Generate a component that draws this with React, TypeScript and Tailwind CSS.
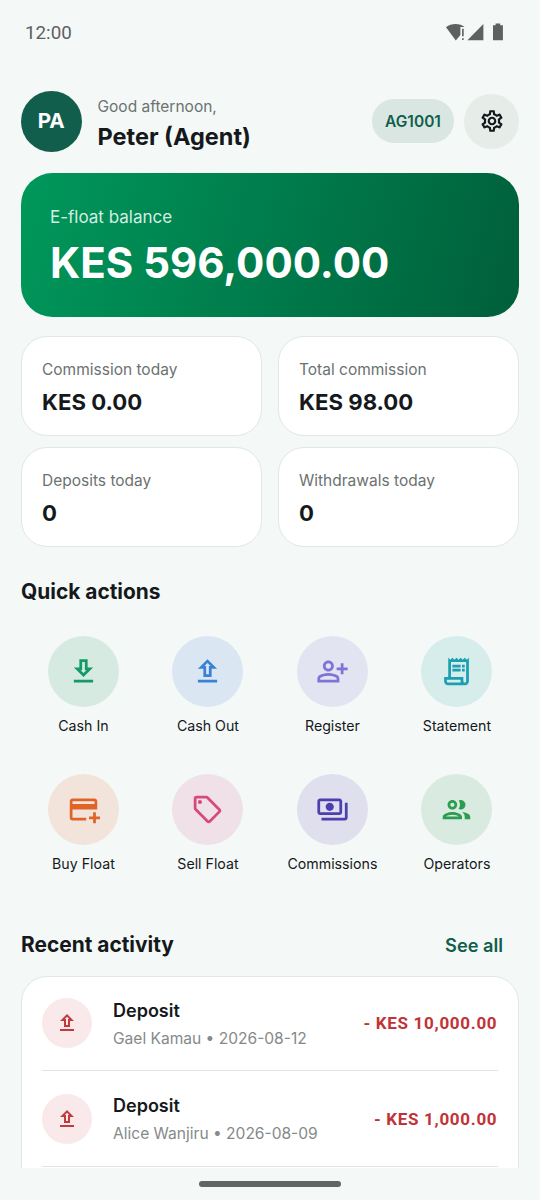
import type { IconType } from 'react-icons';
import {
  MdOutlineAddCard,
  MdOutlineDownload,
  MdOutlinePayments,
  MdOutlinePeople,
  MdOutlinePersonAddAlt,
  MdOutlineReceiptLong,
  MdOutlineSell,
  MdOutlineSettings,
  MdOutlineUpload,
} from 'react-icons/md';

const stats = [
  { label: 'Commission today', value: 'KES 0.00' },
  { label: 'Total commission', value: 'KES 98.00' },
  { label: 'Deposits today', value: '0' },
  { label: 'Withdrawals today', value: '0' },
];

const actions: { label: string; icon: IconType; tone: string }[] = [
  { label: 'Cash In', icon: MdOutlineDownload, tone: 'bg-[#d6eae2] text-[#129a68]' },
  { label: 'Cash Out', icon: MdOutlineUpload, tone: 'bg-[#dae7f2] text-[#3b82d6]' },
  { label: 'Register', icon: MdOutlinePersonAddAlt, tone: 'bg-[#e3e4f2] text-[#8172d8]' },
  { label: 'Statement', icon: MdOutlineReceiptLong, tone: 'bg-[#d7edeb] text-[#1c9fb0]' },
  { label: 'Buy Float', icon: MdOutlineAddCard, tone: 'bg-[#f2e4da] text-[#df6428]' },
  { label: 'Sell Float', icon: MdOutlineSell, tone: 'bg-[#efe1e7] text-[#d8487c]' },
  { label: 'Commissions', icon: MdOutlinePayments, tone: 'bg-[#dfdfed] text-[#4d3fb0]' },
  { label: 'Operators', icon: MdOutlinePeople, tone: 'bg-[#d9eae0] text-[#2a9d50]' },
];

const activity = [
  { title: 'Deposit', meta: 'Gael Kamau • 2026-08-12', amount: '- KES 10,000.00' },
  { title: 'Deposit', meta: 'Alice Wanjiru • 2026-08-09', amount: '- KES 1,000.00' },
];

function StatusBar() {
  return (
    <div className="flex h-[66px] shrink-0 items-center justify-between pl-[25px] pr-[36px] text-[#5f6161]">
      <span className="font-['Roboto',sans-serif] text-[18.8px] leading-[26px]">12:00</span>
      <svg width="58" height="18" viewBox="0 0 58 18" fill="currentColor" className="mt-[-3px]">
        <path d="M0 4.2C5 0 14 -.2 18.6 4H14.4v8L9.8 17.4z" />
        <path d="M16.1 5.8h1.6v7.4h-1.6zM16.1 15.2h1.6V17h-1.6z" />
        <path d="M37.4 1v16.2H21.4z" />
        <path d="M47 2.2h2.6V.6h4.6v1.6h2.7v15H47z" />
      </svg>
    </div>
  );
}

function Header() {
  return (
    <header className="mt-[25px] flex h-[60.5px] shrink-0 items-center px-[21px]">
      <div className="flex size-[60.5px] items-center justify-center rounded-full bg-[#115e4c] text-[20.6px] font-bold text-white">
        PA
      </div>
      <div className="ml-4 flex-1 pt-[2px]">
        <p className="text-[15.5px] leading-[29px] text-[#6b7270]">Good afternoon,</p>
        <h1 className="text-[23.5px] font-bold leading-[31px] text-[#15191b]">Peter (Agent)</h1>
      </div>
      <div className="flex h-[44px] w-[82px] items-center justify-center rounded-full bg-[#d9e6e2] text-[15.5px] font-semibold text-[#115e4c]">
        AG1001
      </div>
      <button className="ml-[10px] flex size-[55px] items-center justify-center rounded-full bg-[#e6ede9] text-[#15191b]">
        <MdOutlineSettings size={26} />
      </button>
    </header>
  );
}

export default function App() {
  return (
    <div className="flex h-[1200px] w-[540px] flex-col overflow-hidden bg-[#f4f8f7] font-['Inter',sans-serif]">
      <StatusBar />
      <main className="flex h-[1102px] shrink-0 flex-col overflow-hidden">
        <Header />

        {/* Balance */}
        <section className="mx-[21px] mt-[21px] h-[144.5px] shrink-0 rounded-[31.5px] bg-[linear-gradient(106deg,#00985b,#005f3b)] pl-[29px] pt-[32px] text-white">
          <p className="text-[17px] leading-6 text-[#d5eee3]">E-float balance</p>
          <p className="mt-[7px] text-[42px] font-bold leading-[54px]">KES 596,000.00</p>
        </section>

        {/* Stats */}
        <section className="mt-[18.5px] grid shrink-0 grid-cols-2 gap-x-4 gap-y-[10.5px] px-[21px]">
          {stats.map((s) => (
            <div key={s.label} className="h-[100.5px] rounded-[26px] border-[1.3px] border-[#dfe8e5] bg-white pl-[20px] pt-[21px]">
              <p className="text-[15.5px] leading-6 text-[#6b7270]">{s.label}</p>
              <p className="mt-[5px] text-[22.2px] font-bold leading-[30px] text-[#15191b]">{s.value}</p>
            </div>
          ))}
        </section>

        {/* Quick actions */}
        <h2 className="mt-[30px] shrink-0 px-[21px] text-[20.9px] font-bold leading-[30px] text-[#15191b]">Quick actions</h2>
        <section className="mt-[28.5px] grid shrink-0 grid-cols-4 gap-y-[28.5px] pl-[21.2px] pr-[20.8px]">
          {actions.map(({ label, icon: Icon, tone }) => (
            <div key={label} className="flex h-[110px] flex-col items-center">
              <div className={`flex size-[71px] shrink-0 items-center justify-center rounded-full ${tone}`}>
                <Icon size={33} />
              </div>
              <span className="mt-[8.4px] text-[14.2px] leading-[22px] text-[#15191b]">{label}</span>
            </div>
          ))}
        </section>

        {/* Recent activity */}
        <div className="mt-[46px] flex shrink-0 items-center justify-between pl-[21px] pr-[37px]">
          <h2 className="text-[20.9px] font-bold leading-[30px] text-[#15191b]">Recent activity</h2>
          <a className="text-[18.2px] font-semibold leading-[29px] text-[#115e4c]">See all</a>
        </div>
        <section className="mx-[21px] mt-[15.5px] h-[320px] shrink-0 rounded-[26px] border-[1.3px] border-[#dfe8e5] bg-white px-[20px]">
          {activity.map((a) => (
            <div key={a.meta} className="flex h-[96px] items-center border-b-[1.3px] border-[#e2e5e4] pt-[1.4px] first:h-[94px] first:pt-[0.4px]">
              <div className="flex size-[50px] items-center justify-center rounded-full bg-[#f9e9ea] text-[#c13a3c]">
                <MdOutlineUpload size={24} />
              </div>
              <div className="ml-[21px] flex-1 pt-[3px]">
                <p className="text-[18px] font-semibold leading-[28px] text-[#15191b]">{a.title}</p>
                <p className="text-[15.55px] leading-[28px] text-[#858a89]">{a.meta}</p>
              </div>
              <span className="mr-[0.7px] pt-[2px] font-['Roboto',sans-serif] text-[17px] font-bold tracking-[0.7px] text-[#c03336]">{a.amount}</span>
            </div>
          ))}
        </section>
      </main>

      {/* Gesture bar */}
      <div className="flex flex-1 justify-center pt-[13px]">
        <div className="h-[6px] w-[142px] rounded-full bg-[#616565]" />
      </div>
    </div>
  );
}
